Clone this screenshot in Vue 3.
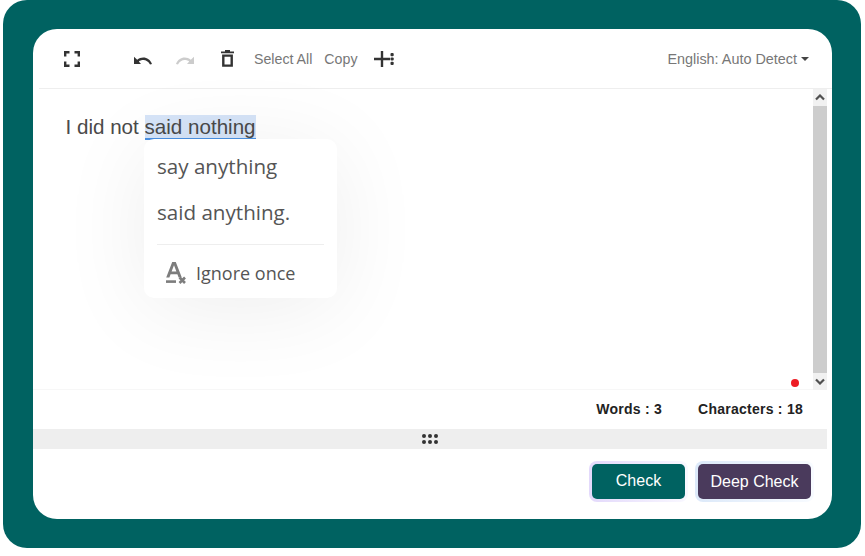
<script setup>
const suggestions = ['say anything', 'said anything.']
</script>

<template>
  <div class="page">
    <div class="frame">
      <div class="card">
        <div class="toolbar">
          <div class="tools">
            <button class="icon expand" aria-label="Fullscreen">
              <svg width="16" height="16" viewBox="0 0 16 16"><path d="M1.200 5.500V1.200h4.300M10.500 1.200h4.300v4.300M14.800 10.500v4.300h-4.300M5.500 14.800H1.200v-4.300" fill="none" stroke="#333" stroke-width="2.400"/></svg>
            </button>
            <button class="icon undo" aria-label="Undo">
              <svg width="20" height="12" viewBox="0 0 20 12"><path d="M19 11C17.500 6.800 14 4.600 10.300 4.600 8 4.600 6 5.300 4.200 6.800L1 3.800V11h7L5.800 8.500C7 7.500 8.500 7 10.300 7 13 7 15.500 8.600 17 11.500Z" fill="#333"/></svg>
            </button>
            <button class="icon redo" aria-label="Redo">
              <svg width="20" height="12" viewBox="0 0 20 12"><path d="M1 11C2.500 6.800 6 4.600 9.700 4.600 12 4.600 14 5.300 15.800 6.800L19 3.800V11h-7l2.200-2.500C13 7.500 11.500 7 9.700 7 7 7 4.500 8.600 3 11.500Z" fill="#ccc"/></svg>
            </button>
            <button class="icon trash" aria-label="Delete">
              <svg width="13" height="17" viewBox="0 0 13 17"><path d="M4 0h5v1.500h4V3.300H0V1.500h4Z" fill="#333"/><path d="M2.300 5.600h8.400v10H2.300Z" fill="none" stroke="#333" stroke-width="2.400"/></svg>
            </button>
            <span class="tool-text select-all">Select All</span>
            <span class="tool-text copy">Copy</span>
            <button class="icon more" aria-label="More">
              <svg width="21" height="18" viewBox="0 0 21 18"><path d="M7.800 1h2.400v6.800H17v2.400h-6.800V17H7.800V10.200H1V7.800h6.800Z" fill="#333"/><rect x="17.500" y="3" width="3.200" height="3.200" rx="1" fill="#333"/><rect x="17.500" y="7.400" width="3.200" height="3.200" rx="1" fill="#333"/><rect x="17.500" y="11.800" width="3.200" height="3.200" rx="1" fill="#333"/></svg>
            </button>
          </div>
          <div class="lang">English: Auto Detect<span class="caret"></span></div>
        </div>

        <div class="editor-wrap">
          <div class="editor">
            <p class="text">I did not <span class="flagged">said nothing</span></p>
            <div class="popup">
              <div v-for="s in suggestions" :key="s" class="suggestion">{{ s }}</div>
              <div class="divider"></div>
              <div class="ignore">
                <svg width="22" height="24" viewBox="0 0 22 24"><path d="M7.200 1h3.600l6 15.500h-3.200l-1.200-3.300H5.600L4.400 16.500H1.200ZM6.600 10.500h4.800L9 4.200Z" fill="#7d7d7d"/><rect x="1" y="19.300" width="10" height="2.600" fill="#7d7d7d"/><path d="M14.500 16.500l5.500 5.500M20 16.500l-5.500 5.500" stroke="#7d7d7d" stroke-width="2.600"/></svg>
                <span>Ignore once</span>
              </div>
            </div>
            <span class="dot"></span>
          </div>
          <div class="scrollbar">
            <div class="arrow">
              <svg width="10" height="7" viewBox="0 0 10 7"><path d="M1 5.500l4-4 4 4" fill="none" stroke="#505050" stroke-width="2.200"/></svg>
            </div>
            <div class="thumb"></div>
            <div class="arrow">
              <svg width="10" height="7" viewBox="0 0 10 7"><path d="M1 1.500l4 4 4-4" fill="none" stroke="#505050" stroke-width="2.200"/></svg>
            </div>
          </div>
        </div>

        <div class="status">
          <span class="stat">Words : 3</span>
          <span class="stat">Characters : 18</span>
        </div>

        <div class="handle">
          <svg width="16" height="10" viewBox="0 0 16 10">
            <circle v-for="x in [2, 8, 14]" :key="'a' + x" :cx="x" cy="2" r="2" fill="#333"/>
            <circle v-for="x in [2, 8, 14]" :key="'b' + x" :cx="x" cy="8" r="2" fill="#333"/>
          </svg>
        </div>

        <div class="footer">
          <div class="glow glow-check"><button class="btn check">Check</button></div>
          <div class="glow glow-deep"><button class="btn deep">Deep Check</button></div>
        </div>
      </div>
    </div>
  </div>
</template>

<style>
html, body { margin: 0; background: #fff; }
</style>

<style scoped>
.page {
  width: 865px;
  height: 556px;
  padding-left: 3px;
  box-sizing: border-box;
  font-family: "Liberation Sans", Arial, sans-serif;
  overflow: hidden;
}
.frame {
  width: 858px;
  height: 548px;
  padding: 29px 0 0 30px;
  box-sizing: border-box;
  background: #006261;
  border-radius: 24px;
}
.card {
  width: 799px;
  height: 490px;
  background: #fff;
  border-radius: 24px;
  display: flex;
  flex-direction: column;
  overflow: hidden;
}
.toolbar {
  height: 59px;
  margin-left: 6px;
  padding-right: 23px;
  flex: none;
  display: flex;
  align-items: center;
  justify-content: space-between;
  border-bottom: 1px solid #eee;
}
.tools { display: flex; align-items: center; }
.icon {
  display: flex;
  padding: 0;
  border: 0;
  background: none;
}
.expand { margin-left: 25px; }
.undo { margin-left: 53px; }
.redo { margin-left: 22px; }
.trash { margin-left: 26px; }
.tool-text { font-size: 14.2px; color: #777; }
.select-all { margin-left: 20px; }
.copy { margin-left: 12px; }
.more { margin-left: 16px; }
.lang { font-size: 14.4px; color: #777; display: flex; align-items: center; }
.caret {
  margin-left: 4px;
  border-left: 4px solid transparent;
  border-right: 4px solid transparent;
  border-top: 4px solid #444;
}
.editor-wrap {
  height: 301px;
  flex: none;
  display: flex;
  padding-right: 5px;
}
.editor {
  position: relative;
  flex: 1;
  border-bottom: 1px solid #f7f7f7;
  box-sizing: border-box;
}
.text {
  margin: 26px 0 0 32.500px;
  font-size: 20.6px;
  line-height: 24px;
  color: #4a4a4a;
}
.flagged {
  background: #d6e4f8;
  box-shadow: 0 2px 0 #4a90e2;
}
.popup {
  position: absolute;
  left: 111px;
  top: 50px;
  width: 193px;
  height: 159px;
  padding: 4px 13px 0;
  box-sizing: border-box;
  background: #fff;
  border-radius: 10px;
  font-family: "Open Sans", sans-serif;
  color: #555;
  box-shadow: 0 10px 90px rgba(0, 0, 0, 0.07);
}
.suggestion {
  height: 46px;
  line-height: 46px;
  font-size: 20.6px;
}
.divider {
  height: 1px;
  margin-top: 9px;
  background: #eee;
}
.ignore {
  display: flex;
  align-items: center;
  gap: 9px;
  margin: 14px 0 0 8px;
  font-size: 18px;
  line-height: 28px;
}
.dot {
  position: absolute;
  right: 14px;
  bottom: 2px;
  width: 8px;
  height: 8px;
  border-radius: 50%;
  background: #ed1c24;
}
.scrollbar {
  width: 14px;
  flex: none;
  display: flex;
  flex-direction: column;
  background: #f1f1f1;
}
.arrow {
  height: 17px;
  display: flex;
  align-items: center;
  justify-content: center;
}
.thumb { flex: 1; background: #cdcdcd; }
.status {
  height: 39px;
  padding-bottom: 2px;
  box-sizing: border-box;
  flex: none;
  display: flex;
  justify-content: flex-end;
  align-items: center;
  gap: 36px;
  padding-right: 29px;
  font-size: 14px;
  font-weight: 700;
  color: #222;
  letter-spacing: 0.25px;
}
.handle {
  height: 20px;
  margin-right: 5px;
  flex: none;
  display: flex;
  align-items: center;
  justify-content: center;
  background: #eee;
}
.footer {
  flex: 1;
  display: flex;
  justify-content: flex-end;
  gap: 7px;
  padding: 12px 18px 0 0;
}
.glow {
  padding: 3px;
  border-radius: 8px;
  height: 35px;
}
.glow-check { background: linear-gradient(90deg, #e3d9fb, #f9f8ff); }
.glow-deep { background: linear-gradient(90deg, #dce9f9, #f8fbff); }
.btn {
  height: 35px;
  border: 0;
  border-radius: 5px;
  color: #fff;
  font: 16px "Liberation Sans", Arial, sans-serif;
  padding: 0;
}
.check { width: 93px; padding-bottom: 1px; background: #006261; }
.deep { width: 113px; background: #4a3a5c; }
</style>
